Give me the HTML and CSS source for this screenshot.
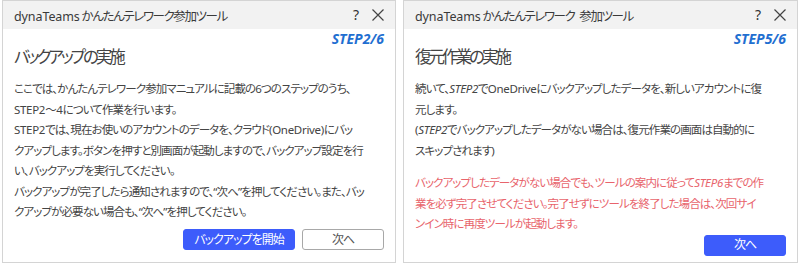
FILE: index.html
```html
<!DOCTYPE html>
<html lang="ja">
<head>
<meta charset="utf-8">
<link rel="stylesheet" href="styles.css">
</head>
<body>
<div class="page">
  <section class="dialog left">
    <header class="titlebar">
      <span class="title"><span class="en">dynaTeams</span> かんたんテレワーク参加ツール</span>
      <span class="controls">
        <span class="help">?</span>
        <svg class="close" width="12" height="12" viewBox="0 0 12 12"><path d="M0.5 0.5 L11.5 11.5 M11.5 0.5 L0.5 11.5" stroke="#444" stroke-width="1.2" fill="none"/></svg>
      </span>
    </header>
    <div class="content">
      <div class="step">STEP2/6</div>
      <h1 class="heading">バックアップの実施</h1>
      <p class="text">ここでは、かんたんテレワーク参加マニュアルに記載の6つのステップのうち、<br><span class="en">STEP2～4</span>について作業を行います。<br><span class="en">STEP2</span>では、現在お使いのアカウントのデータを、クラウド<span class="en">(OneDrive)</span>にバッ<br>クアップします。ボタンを押すと別画面が起動しますので、バックアップ設定を行<br>い、バックアップを実行してください。<br>バックアップが完了したら通知されますので、“次へ”を押してください。また、バッ<br>クアップが必要ない場合も、“次へ”を押してください。</p>
      <div class="actions">
        <button class="btn primary wide">バックアップを開始</button>
        <button class="btn outline">次へ</button>
      </div>
    </div>
  </section>
  <section class="dialog right">
    <header class="titlebar">
      <span class="title"><span class="en">dynaTeams</span> かんたんテレワーク<span class="gap"> </span>参加ツール</span>
      <span class="controls">
        <span class="help">?</span>
        <svg class="close" width="12" height="12" viewBox="0 0 12 12"><path d="M0.5 0.5 L11.5 11.5 M11.5 0.5 L0.5 11.5" stroke="#444" stroke-width="1.2" fill="none"/></svg>
      </span>
    </header>
    <div class="content tightbottom">
      <div class="step">STEP5/6</div>
      <h1 class="heading">復元作業の実施</h1>
      <p class="text">続いて、<i class="en">STEP2</i>で<span class="en">OneDrive</span>にバックアップしたデータを、新しいアカウントに復<br>元します。<br><span class="en">(</span><i class="en">STEP2</i>でバックアップしたデータがない場合は、復元作業の画面は自動的に<br>スキップされます<span class="en">)</span></p>
      <p class="text warn">バックアップしたデータがない場合でも、ツールの案内に従って<i class="en">STEP6</i>までの作<br>業を必ず完了させてください。完了せずにツールを終了した場合は、次回サイ<br>ンイン時に再度ツールが起動します。</p>
      <div class="actions">
        <button class="btn primary">次へ</button>
      </div>
    </div>
  </section>
</div>
</body>
</html>
```
FILE: styles.css
```css
* { box-sizing: border-box; }
html, body { margin: 0; padding: 0; background: #fff; }
body {
  font-family: "Noto Sans", "Noto Sans CJK JP", sans-serif;
  color: #444;
  width: 800px;
  height: 270px;
  overflow: hidden;
}
.page {
  display: flex;
  gap: 7px;
  padding-left: 2px;
}
.dialog {
  height: 263px;
  border: 1px solid #d4d4d4;
  background: #fff;
  display: flex;
  flex-direction: column;
}
.dialog.left { width: 394px; }
.dialog.right { width: 395px; }
.titlebar {
  height: 28px;
  flex: none;
  background: #f2f2f2;
  display: flex;
  align-items: center;
  justify-content: space-between;
  padding: 0 11px 0 11px;
}
.title {
  font-size: 12.5px;
  letter-spacing: -1.4px;
  color: #3a3a3a;
  white-space: nowrap;
  font-feature-settings: "palt";
}
.title .en { letter-spacing: -0.1px; }
.title .gap { display: inline-block; width: 5px; }
.controls {
  display: flex;
  align-items: center;
  gap: 13px;
}
.help {
  font-size: 14px;
  color: #333;
  line-height: 1;
}
.close { display: block; }
.content {
  flex: 1;
  display: flex;
  flex-direction: column;
  padding: 0 11px 12px 11px;
}
.content.tightbottom { padding-bottom: 13px; }
.step {
  align-self: flex-end;
  font-size: 14px;
  font-weight: bold;
  font-style: italic;
  color: #1f6fd1;
  line-height: 15px;
  margin-top: 2px;
}
.heading {
  margin: 0;
  font-size: 16.5px;
  letter-spacing: -3px;
  font-weight: normal;
  color: #444;
  line-height: 22px;
  font-feature-settings: "palt";
}
.text {
  margin: 11px 0 0 0;
  font-size: 11.5px;
  letter-spacing: -0.9px;
  line-height: 20.5px;
  color: #444;
  white-space: nowrap;
  font-feature-settings: "palt";
}
.text .en { letter-spacing: -0.3px; }
.text i { font-style: italic; }
.text.warn { color: #e8646c; margin-top: 12px; }
.actions {
  margin-top: auto;
  display: flex;
  justify-content: flex-end;
  gap: 7px;
}
.btn {
  height: 21px;
  width: 82px;
  border-radius: 3px;
  font-family: "Noto Sans", "Noto Sans CJK JP", sans-serif;
  font-size: 12px;
  letter-spacing: -1px;
  line-height: 1;
  padding: 0;
  font-feature-settings: "palt";
}
.btn.wide { width: 112px; }
.btn.primary {
  background: #3d5cfb;
  border: 1px solid #3d5cfb;
  color: #fff;
}
.btn.outline {
  background: #fff;
  border: 1px solid #a8a8a8;
  color: #555;
}
```
